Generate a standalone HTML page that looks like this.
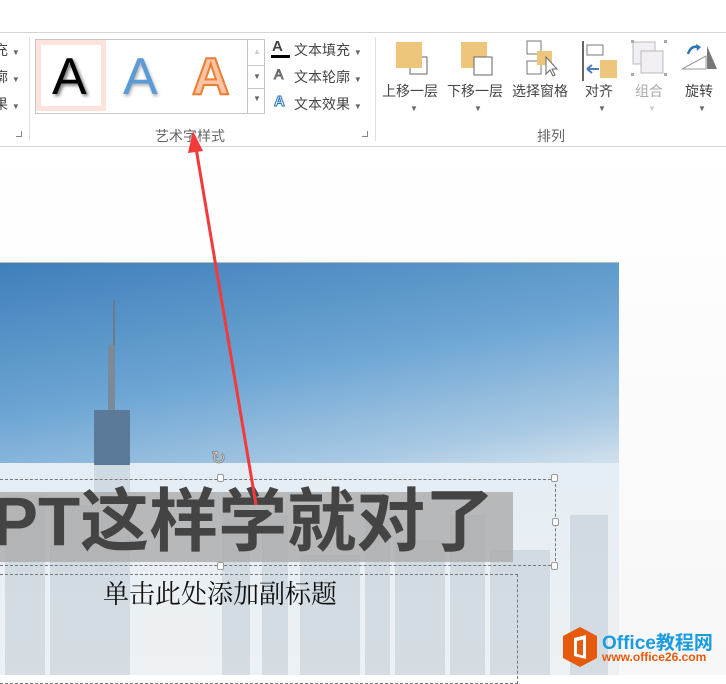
<!DOCTYPE html>
<html><head><meta charset="utf-8"><style>
*{margin:0;padding:0;box-sizing:border-box}
body{width:726px;height:675px;overflow:hidden;position:relative;background:#fff;font-family:"Liberation Sans","Noto Sans CJK SC",sans-serif;color:#444}
.abs{position:absolute}
.t{font-size:14px;color:#444;white-space:nowrap}
.dd{font-size:8px;color:#666}
</style></head><body>
<!-- ribbon -->
<div class="abs" style="left:0;top:32px;width:726px;height:1px;background:#d4d4d4"></div>
<div class="abs" style="left:0;top:146px;width:726px;height:1px;background:#d4d4d4"></div>
<div class="abs" style="left:29px;top:37px;width:1px;height:104px;background:#e1e1e1"></div>
<div class="abs" style="left:375px;top:37px;width:1px;height:104px;background:#e1e1e1"></div>
<div class="abs t" style="left:-6px;top:40px">充 <span class="dd">▼</span></div>
<div class="abs t" style="left:-6px;top:67px">廓 <span class="dd">▼</span></div>
<div class="abs t" style="left:-6px;top:94px">果 <span class="dd">▼</span></div>
<div class="abs" style="left:16px;top:131px;width:6px;height:6px;border-right:1px solid #888;border-bottom:1px solid #888"></div>
<!-- gallery -->
<div class="abs" style="left:35px;top:39px;width:230px;height:75px;border:1px solid #c6c6c6;background:#fff"></div>
<div class="abs" style="left:36px;top:40px;width:70px;height:71px;border:5px solid #fde3dc;background:#fff"></div>
<div class="abs" style="left:52px;top:47px;font-size:52px;color:#000;text-shadow:2px 2px 3px #777">A</div>
<div class="abs" style="left:123px;top:47px;font-size:52px;color:#5b9bd5;text-shadow:1px 2px 3px #aaa">A</div>
<div class="abs" style="left:192px;top:47px;font-size:52px;font-weight:bold;color:#f7c4a5;-webkit-text-stroke:2px #ed7d31">A</div>
<div class="abs" style="left:247px;top:39px;width:18px;height:75px;border-left:1px solid #c6c6c6"></div>
<div class="abs" style="left:247px;top:65px;width:18px;height:1px;background:#c6c6c6"></div>
<div class="abs" style="left:247px;top:88px;width:18px;height:1px;background:#c6c6c6"></div>
<div class="abs dd" style="left:253px;top:47px;color:#ccc">▲</div>
<div class="abs dd" style="left:253px;top:72px">▼</div>
<div class="abs dd" style="left:253px;top:94px">▼</div>
<div class="abs" style="left:272px;top:38px;font-size:15px;font-weight:bold;color:#444">A</div>
<div class="abs" style="left:271px;top:55px;width:19px;height:3px;background:#000"></div>
<div class="abs" style="left:274px;top:66px;font-size:14px;color:#fff;-webkit-text-stroke:1px #666">A</div>
<div class="abs" style="left:274px;top:93px;font-size:15px;font-weight:bold;color:#fff;-webkit-text-stroke:1px #2e75b6;text-shadow:0 0 2px #9cf">A</div>
<div class="abs t" style="left:294px;top:40px">文本填充 <span class="dd">▼</span></div>
<div class="abs t" style="left:294px;top:67px">文本轮廓 <span class="dd">▼</span></div>
<div class="abs t" style="left:294px;top:94px">文本效果 <span class="dd">▼</span></div>
<div class="abs t" style="left:155px;top:126px;color:#666">艺术字样式</div>
<div class="abs" style="left:362px;top:131px;width:6px;height:6px;border-right:1px solid #888;border-bottom:1px solid #888"></div>
<!-- arrange -->
<svg class="abs" style="left:376px;top:36px" width="350" height="50">
<rect x="20" y="6" width="26" height="26" fill="#edc67c"/><rect x="34" y="21" width="17" height="17" fill="#fff" stroke="#666"/><rect x="20" y="6" width="26" height="26" fill="#edc67c"/>
<rect x="85" y="6" width="26" height="26" fill="#edc67c"/><rect x="98" y="21" width="18" height="18" fill="#fff" stroke="#666"/>
<rect x="151" y="5" width="14" height="13" fill="#fff" stroke="#777"/><rect x="151" y="25" width="14" height="13" fill="#fff" stroke="#777"/><rect x="161" y="15" width="15" height="14" fill="#edc67c"/><path d="M170 21 L170 38 L174 34 L177 40 L179 39 L176 33 L181 33 Z" fill="#fff" stroke="#666"/>
<rect x="206" y="5" width="2" height="40" fill="#666"/><rect x="211" y="9" width="16" height="10" fill="#fff" stroke="#777"/><rect x="224" y="24" width="17" height="18" fill="#edc67c"/><path d="M211 33 h12 M211 33 l5 -4 M211 33 l5 4" stroke="#4a7cbd" stroke-width="2" fill="none"/>
<rect x="257" y="6" width="22" height="22" fill="#f1eef4" stroke="#bbb"/><rect x="265" y="15" width="22" height="22" fill="#f1eef4" stroke="#bbb"/><rect x="255" y="4" width="3" height="3" fill="#aaa"/><rect x="288" y="4" width="3" height="3" fill="#aaa"/><rect x="255" y="37" width="3" height="3" fill="#aaa"/><rect x="288" y="37" width="3" height="3" fill="#aaa"/>
<path d="M306 33 L330 20 L330 33 Z" fill="#fff" stroke="#999"/><path d="M331 10 L341 33 L331 33 Z" fill="#777"/><path d="M312 18 q3 -9 11 -7" stroke="#2e75b6" stroke-width="2.5" fill="none"/><path d="M320 8 l5 3 l-4 4" fill="#2e75b6"/>
</svg>
<div class="abs t" style="left:382px;top:81px">上移一层</div>
<div class="abs t" style="left:447px;top:81px">下移一层</div>
<div class="abs t" style="left:512px;top:81px">选择窗格</div>
<div class="abs t" style="left:585px;top:81px">对齐</div>
<div class="abs t" style="left:635px;top:81px;color:#aaa">组合</div>
<div class="abs t" style="left:685px;top:81px">旋转</div>
<div class="abs dd" style="left:410px;top:104px">▼</div>
<div class="abs dd" style="left:474px;top:104px">▼</div>
<div class="abs dd" style="left:598px;top:104px">▼</div>
<div class="abs dd" style="left:648px;top:104px;color:#ccc">▼</div>
<div class="abs dd" style="left:698px;top:104px">▼</div>
<div class="abs t" style="left:537px;top:126px;color:#666">排列</div>
<!-- workspace -->
<div class="abs" style="left:0;top:147px;width:726px;height:528px;background:linear-gradient(#fff,#f7f7f7)"></div>
<div class="abs" style="left:0;top:262px;width:619px;height:1px;background:#bbb"></div>
<div class="abs" style="left:0;top:263px;width:619px;height:412px;background:linear-gradient(170deg,#3f7fba 0%,#6ea6d4 30%,#a9c9e3 50%,#d4e3ee 60%,#e5ecf1 100%)"></div>
<div class="abs" style="left:0;top:463px;width:619px;height:212px;background:linear-gradient(#e4edf4,#eef1f3)"></div>
<svg class="abs" style="left:0;top:300px" width="619" height="375">
<rect x="113" y="0" width="2" height="45" fill="#6a7c8c"/><rect x="108" y="45" width="7" height="65" fill="#7a8a98"/><rect x="94" y="110" width="36" height="55" fill="#5a7a98"/>
<g fill="#b7c4cf" opacity=".45">
<rect x="94" y="165" width="36" height="210"/>
<rect x="5" y="195" width="40" height="180"/><rect x="50" y="205" width="45" height="170"/>
<rect x="222" y="200" width="28" height="175"/><rect x="262" y="215" width="26" height="160"/>
<rect x="300" y="255" width="60" height="120"/><rect x="365" y="220" width="25" height="155"/>
<rect x="395" y="240" width="50" height="135"/><rect x="450" y="215" width="35" height="160"/>
<rect x="490" y="250" width="60" height="125"/><rect x="570" y="215" width="38" height="160"/>
</g>
</svg>
<!-- title -->
<div class="abs" style="left:0;top:492px;width:513px;height:70px;background:rgba(170,170,170,.8)"></div>
<div class="abs" style="left:-8px;top:482px;font-size:69px;font-weight:bold;color:#444;white-space:nowrap;line-height:80px">PT这样学就对了</div>
<div class="abs" style="left:0;top:479px;width:556px;height:87px;border:1px dashed #777;border-left:none"></div>
<div class="abs" style="left:217px;top:474px;width:7px;height:8px;border:1px solid #999;background:#fff;border-radius:2px"></div>
<div class="abs" style="left:551px;top:474px;width:7px;height:8px;border:1px solid #999;background:#fff;border-radius:2px"></div>
<div class="abs" style="left:552px;top:518px;width:7px;height:8px;border:1px solid #999;background:#fff;border-radius:2px"></div>
<div class="abs" style="left:217px;top:562px;width:7px;height:8px;border:1px solid #999;background:#fff;border-radius:2px"></div>
<div class="abs" style="left:551px;top:562px;width:7px;height:8px;border:1px solid #999;background:#fff;border-radius:2px"></div>
<div class="abs" style="left:211px;top:448px;font-size:18px;color:#fff;-webkit-text-stroke:1px #888">↻</div>
<div class="abs" style="left:0;top:574px;width:518px;height:110px;border:1px dashed #777;border-left:none"></div>
<div class="abs" style="left:103px;top:574px;font-size:26px;color:#111;font-family:'Liberation Serif','Noto Serif CJK SC',serif;white-space:nowrap">单击此处添加副标题</div>
<!-- logo -->
<svg class="abs" style="left:562px;top:626px" width="36" height="42"><path d="M18 1 L35 10 L35 32 L18 41 L1 32 L1 10 Z" fill="#e65a0e"/><path d="M12 12 L24 9 L24 33 L12 30 Z M15 15 v13 l6 1.5 v-16 Z" fill="#fff"/></svg>
<div class="abs" style="left:602px;top:628px;font-size:19px;font-weight:bold;color:#1b9be0;white-space:nowrap">Office教程网</div>
<div class="abs" style="left:602px;top:650px;font-size:12px;font-weight:bold;color:#e65a0e;white-space:nowrap">www.office26.com</div>
<!-- arrow -->
<svg class="abs" style="left:0;top:0" width="726" height="675"><line x1="256" y1="505" x2="196" y2="148" stroke="#f23a3a" stroke-width="3"/><path d="M193 131 L203 151 L188 153 Z" fill="#f23a3a"/></svg>
</body></html>
